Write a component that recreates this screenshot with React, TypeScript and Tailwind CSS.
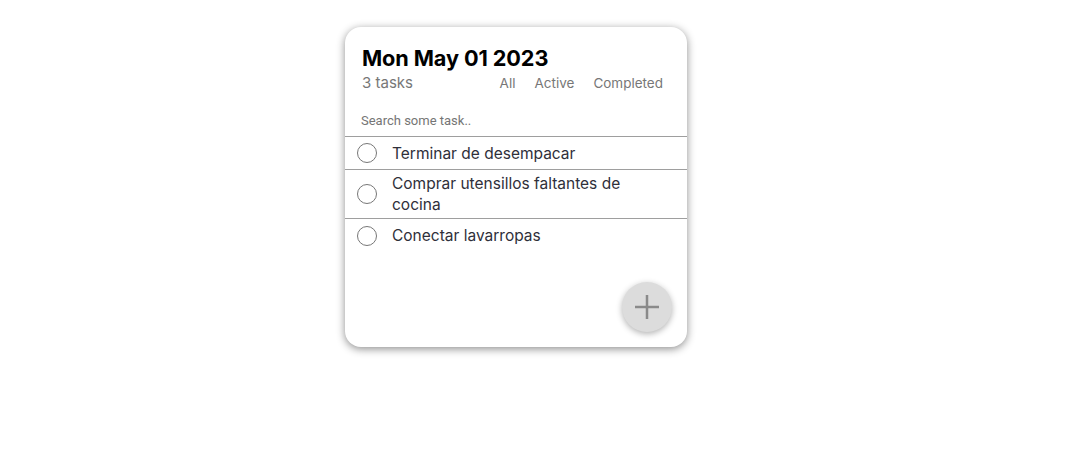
import React from "react";

const tasks = [
  "Terminar de desempacar",
  "Comprar utensillos faltantes de cocina",
  "Conectar lavarropas",
];

export default function App() {
  return (
    <div className="w-[1080px] h-[453px] bg-white" style={{ fontFamily: "Inter, 'Noto Sans', sans-serif" }}>
      <div className="ml-[345px] pt-[27px]">
        <div className="relative w-[342px] h-[320px] bg-white rounded-[16px] shadow-[0_2px_8px_rgba(0,0,0,0.45)] overflow-hidden">
          <div className="px-[17px] pt-[17px]">
            <h1 className="text-[21.7px] leading-[28px] font-bold text-black tracking-[-0.1px]">Mon May 01 2023</h1>
            <div className="flex items-center justify-between mt-[1px]">
              <span className="text-[15px] leading-[20px] text-[#777]">3 tasks</span>
              <div className="flex gap-[19px] text-[13.5px] leading-[20px] text-[#777] pr-[7px]">
                <span>All</span>
                <span>Active</span>
                <span>Completed</span>
              </div>
            </div>
          </div>
          <div className="px-[16px] pt-[14px] pb-[5px]">
            <input
              className="w-full outline-none text-[13px] leading-[16px] placeholder:text-[#757575]"
              style={{ fontFamily: "Roboto, Arial, sans-serif" }}
              placeholder="Search some task.."
            />
          </div>
          <ul className="border-t border-[#9e9e9e]">
            {tasks.map((t, i) => (
              <li
                key={t}
                className={`flex items-center gap-[15px] pl-[12px] pr-[40px] py-[3px] min-h-[33px] ${i < tasks.length - 1 ? "border-b border-[#9e9e9e]" : ""}`}
              >
                <span className="shrink-0 w-[20px] h-[20px] rounded-full border-[1.5px] border-[#777]" />
                <span className="text-[15.5px] leading-[21px] text-[#2f2f3a]">{t}</span>
              </li>
            ))}
          </ul>
          <button className="absolute left-[277px] top-[255px] w-[50px] h-[50px] rounded-full bg-[#dcdcdc] shadow-[0_2px_6px_rgba(0,0,0,0.3)] flex items-center justify-center">
            <svg width="26" height="26" viewBox="0 0 26 26">
              <path d="M13 1v24M1 13h24" stroke="#8a8a8a" strokeWidth="2.5" />
            </svg>
          </button>
        </div>
      </div>
    </div>
  );
}
